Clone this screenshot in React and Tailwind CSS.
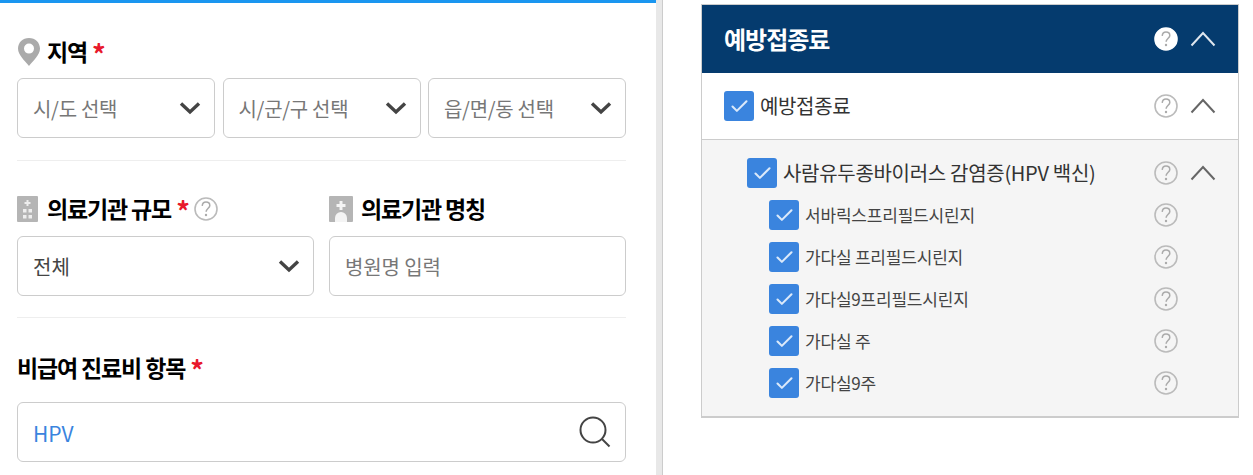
import { Check } from "lucide-react";

const fontKr = { fontFamily: '"Noto Sans CJK KR", "Noto Sans", sans-serif' };

const Chevron = () => (
  <svg width="22" height="14" viewBox="0 0 22 14" fill="none" className="shrink-0">
    <path d="M2 2.5 L11 11 L20 2.5" stroke="#444" strokeWidth="3.4" />
  </svg>
);

const Help = ({ filled }) => (
  <svg width="24" height="24" viewBox="0 0 24 24" className="shrink-0">
    <circle cx="12" cy="12" r="11" fill={filled ? "#fff" : "none"} stroke={filled ? "#fff" : "#bbb"} strokeWidth="1.6" />
    <path d="M8.2 8.8 C8.5 6 10.2 5 12 5 C14.2 5 15.8 6.4 15.8 8.4 C15.8 11 12.4 11.5 12.1 14.8" fill="none" stroke="#aaa" strokeWidth="1.5" />
    <circle cx="12" cy="18" r="1.2" fill="#aaa" />
  </svg>
);

const Up = ({ color }) => (
  <svg width="26" height="16" viewBox="0 0 26 16" fill="none" className="shrink-0">
    <path d="M1.5 14.5 L13 2 L24.5 14.5" stroke={color} strokeWidth="2" />
  </svg>
);

const Box = () => (
  <span className="flex h-[30px] w-[30px] shrink-0 items-center justify-center rounded-[3px] bg-[#3a84de]">
    <Check size={21} color="#dbe9fa" strokeWidth={2.4} />
  </span>
);

const Star = () => (
  <span className="ml-[5px] h-[18px] text-[27px] font-bold leading-[22px] text-[#e8192c]">*</span>
);

const Label = ({ children }) => (
  <span className="mb-[2px] text-[23px] font-bold leading-none tracking-[-1.15px] text-black">{children}</span>
);

const Select = ({ text, dark, className }) => (
  <div className={`flex h-[60px] items-center justify-between rounded-md border border-[#ccc] pl-[15px] pr-[13px] ${className}`}>
    <span className={`pt-[2px] text-[20px] ${dark ? "text-[#444]" : "tracking-[-0.3px] text-[#777]"}`}>{text}</span>
    <Chevron />
  </div>
);

const subItems = ["서바릭스프리필드시린지", "가다실 프리필드시린지", "가다실9프리필드시린지", "가다실 주", "가다실9주"];

export default function App() {
  return (
    <div className="flex h-[475px] w-[1253px] overflow-hidden bg-white" style={fontKr}>
      {/* 왼쪽 검색 폼 */}
      <div className="w-[656px] shrink-0 border-t-[3px] border-[#1a96f0] pl-[17px] pr-[30px]">
        <div className="mt-[34px] flex h-[30px] items-center">
          <svg width="24" height="30" viewBox="0 0 24 30" className="mr-[6px]">
            <path fillRule="evenodd" d="M12 1 C5.6 1 1 5.6 1 11.6 C1 18 8 24 12 29 C16 24 23 18 23 11.6 C23 5.6 18.4 1 12 1 Z M12 6.6 A5 5 0 1 1 12 16.6 A5 5 0 1 1 12 6.6 Z" fill="#aaa" />
          </svg>
          <Label>지역</Label>
          <Star />
        </div>
        <div className="mt-[11px] flex gap-[7.5px]">
          <Select text="시/도 선택" className="w-[198px]" />
          <Select text="시/군/구 선택" className="w-[198px]" />
          <Select text="읍/면/동 선택" className="w-[198px]" />
        </div>

        <div className="mt-[22px] border-t border-[#eee]" />

        <div className="mt-[35px] flex gap-[15px]">
          <div className="w-[297px]">
            <div className="flex h-[26px] items-center">
              <svg width="21" height="26" viewBox="0 0 21 26" className="mr-[9px]">
                <rect width="21" height="26" rx="1" fill="#b5b5b5" />
                <path d="M9.5 4h2v2h2v2h-2v2h-2V8h-2V6h2zM6 13h3.5v3.5H6zM11.5 13H15v3.5h-3.5zM6 19h3.5v3.5H6zM11.5 19H15v3.5h-3.5z" fill="#eee" />
              </svg>
              <Label>의료기관 규모</Label>
              <Star />
              <span className="ml-[4px]">
                <Help />
              </span>
            </div>
            <Select text="전체" dark className="mt-[14px]" />
          </div>
          <div className="w-[297px]">
            <div className="flex h-[26px] items-center gap-[8px]">
              <svg width="24" height="26" viewBox="0 0 24 26">
                <rect width="24" height="26" rx="1" fill="#b5b5b5" />
                <path d="M10.5 5h3v3h3v3h-3v3h-3v-3h-3V8h3zM6 26v-4a6 6 0 0 1 12 0v4z" fill="#f4f4f4" />
              </svg>
              <Label>의료기관 명칭</Label>
            </div>
            <div className="mt-[14px] flex h-[60px] items-center rounded-md border border-[#ccc] pl-[15px]">
              <span className="pt-[2px] text-[20px] tracking-[-0.1px] text-[#777]">병원명 입력</span>
            </div>
          </div>
        </div>

        <div className="mt-[21px] border-t border-[#eee]" />

        <div className="mt-[35px] flex h-[30px] items-center">
          <Label>비급여 진료비 항목</Label>
          <Star />
        </div>
        <div className="mt-[19px] flex h-[60px] items-center justify-between rounded-md border border-[#ccc] pl-[15px] pr-[14px]">
          <span className="pt-[3px] text-[21px] text-[#3a84de]">HPV</span>
          <svg width="32" height="32" viewBox="0 0 32 32" fill="none" stroke="#444" strokeWidth="2">
            <circle cx="14" cy="14" r="12.5" />
            <path d="M23 23 L30.5 30.5" />
          </svg>
        </div>
      </div>

      {/* 구분선 */}
      <div className="w-[7px] shrink-0 border-r border-[#ccc] bg-[#e8e8e8]" />

      {/* 오른쪽 패널 */}
      <div className="pl-[38px] pt-1">
        <div className="w-[538px] border border-b-2 border-[#ccc]">
          <div className="flex h-[68px] items-center justify-between bg-[#053b6e] pl-[22px] pr-[22px]">
            <span className="text-[24px] font-bold leading-none tracking-[-1px] text-white">예방접종료</span>
            <div className="flex items-center gap-[12px]">
              <Help filled />
              <Up color="#dfe6ee" />
            </div>
          </div>
          <div className="flex h-[67px] items-center justify-between border-b border-[#ccc] pl-[22px] pr-[22px]">
            <div className="flex items-center gap-[6px]">
              <Box />
              <span className="text-[20px] tracking-[-0.35px] text-[#333]">예방접종료</span>
            </div>
            <div className="flex items-center gap-[12px]">
              <Help />
              <Up color="#666" />
            </div>
          </div>
          <div className="bg-[#f5f5f5] pb-[18px] pl-[45px] pr-[22px] pt-[18px]">
            <div className="flex h-[30px] items-center justify-between">
              <div className="flex items-center gap-[6px]">
                <Box />
                <span className="text-[20px] tracking-[-0.3px] text-[#333]">사람유두종바이러스 감염증(HPV 백신)</span>
              </div>
              <div className="flex items-center gap-[12px]">
                <Help />
                <Up color="#666" />
              </div>
            </div>
            {subItems.map((item) => (
              <div key={item} className="mt-3 flex h-[30px] items-center justify-between pl-[22px] pr-[38px]">
                <div className="flex items-center gap-[6px]">
                  <Box />
                  <span className="text-[17px] tracking-[-0.2px] text-[#444]">{item}</span>
                </div>
                <Help />
              </div>
            ))}
          </div>
        </div>
      </div>
    </div>
  );
}
